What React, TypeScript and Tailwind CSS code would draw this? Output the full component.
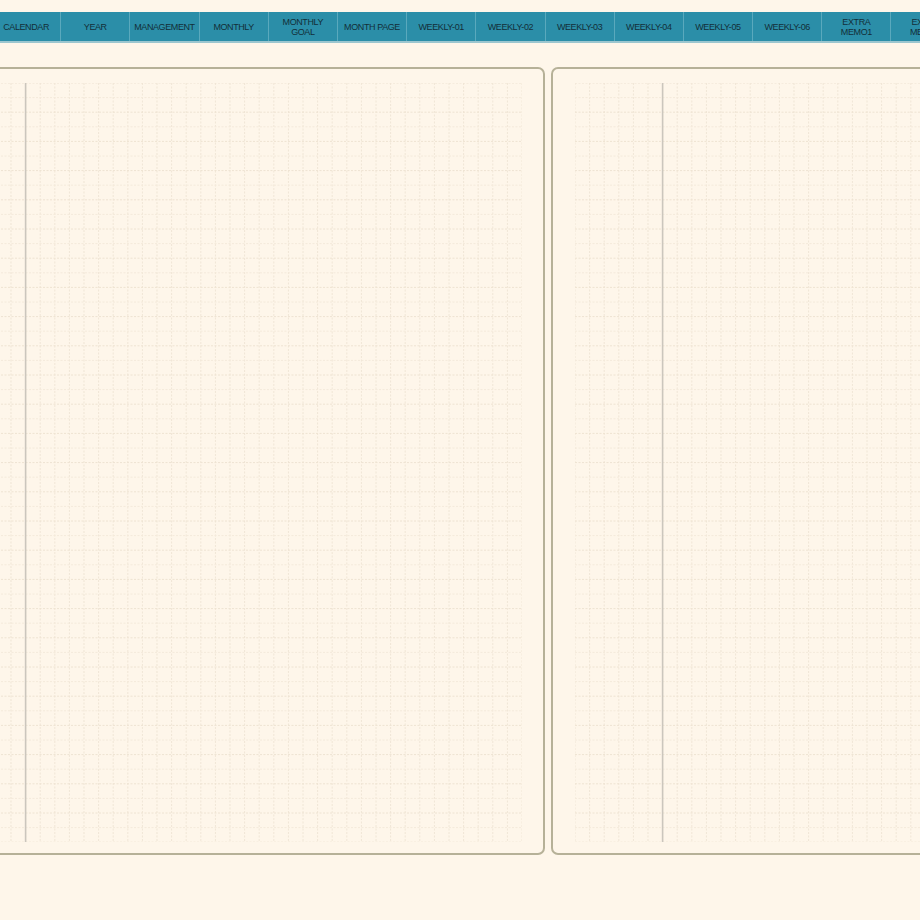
import React from "react";

const TABS: string[][] = [
  ["CALENDAR"],
  ["YEAR"],
  ["MANAGEMENT"],
  ["MONTHLY"],
  ["MONTHLY", "GOAL"],
  ["MONTH PAGE"],
  ["WEEKLY-01"],
  ["WEEKLY-02"],
  ["WEEKLY-03"],
  ["WEEKLY-04"],
  ["WEEKLY-05"],
  ["WEEKLY-06"],
  ["EXTRA", "MEMO1"],
  ["EXTRA", "MEMO2"],
];

const CELL = 14.6;
const COLS = 40;
const ROWS = 52;
const GW = CELL * COLS;
const GH = CELL * ROWS;

function Grid() {
  const v: React.ReactNode[] = [];
  for (let i = 0; i <= COLS; i++) {
    const x = i * CELL;
    v.push(
      <line key={"v" + i} x1={x} y1={0} x2={x} y2={GH} stroke="#f0e6d6" strokeWidth={1} strokeDasharray="2 1.5" />
    );
  }
  const h: React.ReactNode[] = [];
  for (let j = 0; j <= ROWS; j++) {
    const y = j * CELL;
    h.push(
      <line
        key={"h" + j}
        x1={0}
        y1={y}
        x2={GW}
        y2={y}
        stroke={j % 2 === 0 ? "#eee3d2" : "#f4eadb"}
        strokeWidth={1}
        strokeDasharray="2 1.5"
      />
    );
  }
  return (
    <svg width={GW} height={GH} viewBox={`0 0 ${GW} ${GH}`} className="block">
      {v}
      {h}
      <line x1={6 * CELL} y1={0} x2={6 * CELL} y2={GH} stroke="#cbc6bd" strokeWidth={1.6} />
    </svg>
  );
}

function Card() {
  return (
    <div className="shrink-0 w-[631px] h-[788px] rounded-[7px] border-2 border-[#b6b198] bg-[#fef6ea] pt-[14px] pl-[22px]">
      <Grid />
    </div>
  );
}

export default function App() {
  return (
    <div
      className="w-[920px] h-[920px] overflow-hidden bg-[#fef6ea]"
      style={{ fontFamily: '"Liberation Sans", "DejaVu Sans", sans-serif' }}
    >
      <div className="mt-[12px] flex -ml-[8px] h-[31px] border-b-2 border-[#9cc6cf] bg-[#2b8ea8]">
        {TABS.map((t, i) => (
          <div
            key={i}
            className="shrink-0 w-[69.2px] h-full flex flex-col items-center justify-center border-r border-[#5aa9bd] text-[#132f38] text-[9px] leading-[10px] tracking-[-0.4px] text-center"
          >
            {t.map((l, k) => (
              <span key={k} className="whitespace-nowrap">
                {l}
              </span>
            ))}
          </div>
        ))}
      </div>
      <div className="mt-[24px] flex gap-[6px] -ml-[86px]">
        <Card />
        <Card />
      </div>
    </div>
  );
}
